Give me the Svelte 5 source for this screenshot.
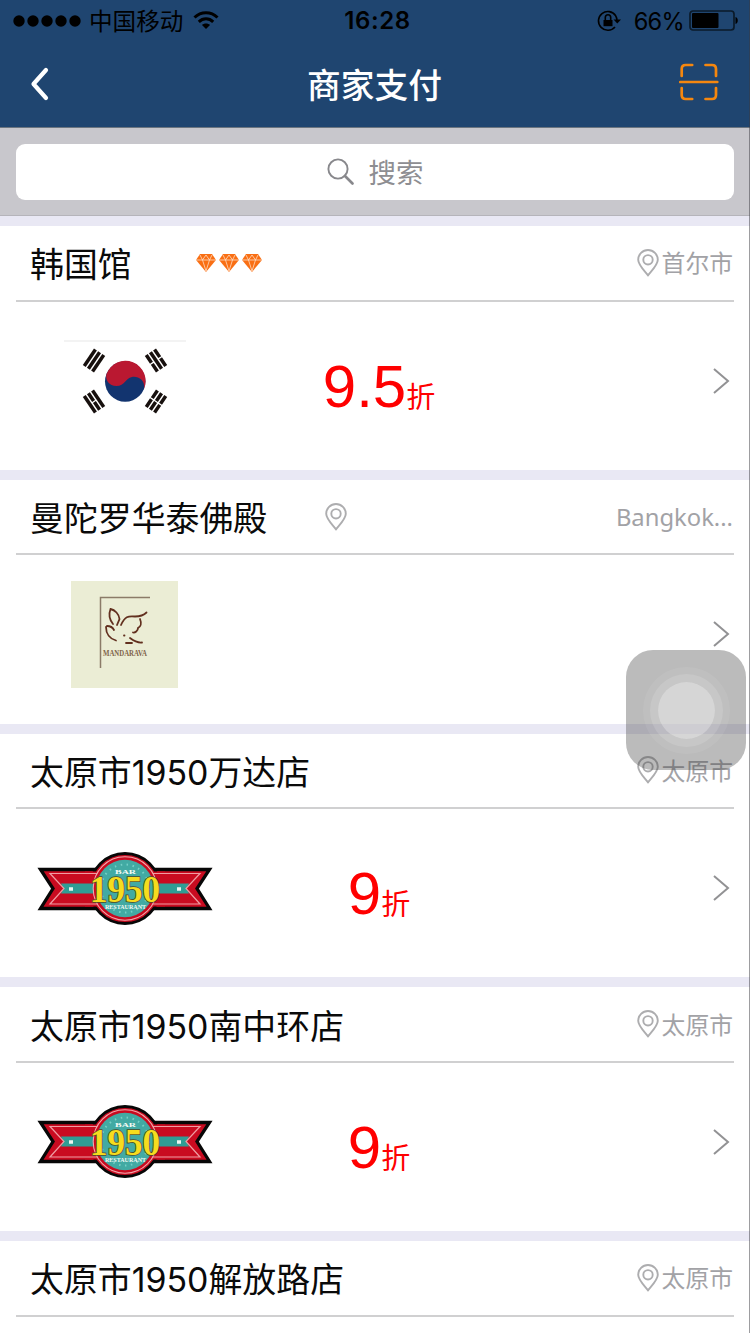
<script>
  const shops = [
    { name: '韩国馆', city: '首尔市', rate: '9.5', logo: 'korea', gems: 3 },
    { name: '曼陀罗华泰佛殿', city: 'Bangkok...', logo: 'mandarava', wide: true },
    { name: '太原市1950万达店', city: '太原市', rate: '9', logo: 'ribbon' },
    { name: '太原市1950南中环店', city: '太原市', rate: '9', logo: 'ribbon' },
    { name: '太原市1950解放路店', city: '太原市' }
  ];
  const corners = [
    { x: 94, y: 360.5, a: 34, split: [0, 0, 0] },
    { x: 156, y: 360.5, a: -34, split: [1, 0, 1] },
    { x: 94, y: 401.5, a: -34, split: [0, 1, 0] },
    { x: 156, y: 401.5, a: 34, split: [1, 1, 1] }
  ];
</script>

{#snippet pin()}
  <svg class="pin" width="22" height="28" viewBox="0 0 22 28">
    <path d="M11 26.3C7.8 22.2 1.2 16 1.2 10.8a9.8 9.8 0 0 1 19.6 0C20.8 16 14.2 22.2 11 26.3Z" />
    <circle cx="11" cy="10.8" r="4.7" />
  </svg>
{/snippet}

{#snippet korea()}
  <svg width="122" height="84" viewBox="64 339 122 84">
    <path d="M64 341h122" stroke="#f3f3f3" stroke-width="2" />
    <circle cx="125.200" cy="381.500" r="20.200" fill="#12346f" />
    <path d="M106.500 374A20.200 20.200 0 1 1 144 389C145.500 380 138 376 132 377C125 378.500 125 386 116.500 386C109 386 105 380 106.500 374Z" fill="#ba1831" />
    {#each corners as c}
      <g transform={`translate(${c.x} ${c.y}) rotate(${c.a})`} stroke="#17100e" stroke-width="3.500">
        {#each c.split as s, i}
          <path d={s ? `M${(i - 1) * 5} -10v9.300m0 1.400v9.300` : `M${(i - 1) * 5} -10v20`} />
        {/each}
      </g>
    {/each}
  </svg>
{/snippet}

{#snippet mandarava()}
  <svg width="107" height="107" viewBox="0 0 107 107">
    <rect width="107" height="107" fill="#ebedd5" />
    <path d="M29.500 87V16.500H79" fill="none" stroke="#8b7b68" stroke-width="1.500" />
    <g fill="none" stroke="#62301f" stroke-width="1.800" stroke-linecap="round">
      <path d="M42 43C38 38 38 32 39.500 28C44 29 48 33 48.500 38L46 44" />
      <path d="M50 44C54 35 57 35 64 35.500C69 35.500 73 34 75.500 31.500" />
      <path d="M69 38C71 43 70 45 67 47C67 50 64 52 62 51.500" />
      <path d="M35 46C35 53 39 58 45 59.500M36 45C39 45 42 47 43 49M53 54.500h.5M55 62h6M59 57C63 60 67 62 71 61.500" />
    </g>
    <text x="32" y="75" textLength="44" lengthAdjust="spacingAndGlyphs" class="mand">MANDARAVA</text>
  </svg>
{/snippet}

{#snippet ribbon()}
  <svg width="178" height="76" viewBox="36 851 178 76">
    <path d="M40.500 869.500H209.500L197 888.500L209.500 908.500H40.500L53 888.500Z" fill="#c90b20" stroke="#070707" stroke-width="3.300" />
    <circle cx="125" cy="888.500" r="35" fill="#c90b20" stroke="#070707" stroke-width="2.800" />
    <path d="M85 871.500H165V906.500H85Z" fill="#c90b20" />
    <path d="M61 883.500H189L186.500 888.500L189 893.500H61L63.500 888.500Z" fill="#309d94" />
    <path d="M97 873.500H50L64 888.500L50 904H97M153 873.500H200L186 888.500L200 904H153" fill="none" stroke="#ef9da3" stroke-width="1.200" />
    <circle cx="125" cy="888.500" r="31.800" fill="#c90b20" stroke="#f0a8ac" stroke-width="1.100" />
    <circle cx="125" cy="888.500" r="28.700" fill="#42aaa3" />
    <circle cx="125" cy="888.500" r="24" fill="none" stroke="#75cfc6" stroke-width="2" stroke-dasharray="1.500 4.500" />
    <path d="M69 889h4m104 0h4" stroke="#e9f5ef" stroke-width="3.500" />
    <text x="115" y="874" textLength="21" lengthAdjust="spacingAndGlyphs" class="bar">BAR</text>
    <text x="90" y="901.500" textLength="70" lengthAdjust="spacingAndGlyphs" class="year">1950</text>
    <text x="105" y="909" textLength="41" lengthAdjust="spacingAndGlyphs" class="rest">RESTAURANT</text>
  </svg>
{/snippet}

<main>
  <header>
    <div class="status">
      <div class="carrier">
        <svg width="70" height="14" viewBox="0 0 70 14">
          {#each [0, 1, 2, 3, 4] as i}<circle cx={6 + i * 14} cy="7" r="5.7" />{/each}
        </svg>
        <span>中国移动</span>
        <svg class="wifi" width="26" height="20" viewBox="0 0 26 20" fill="none" stroke="#000" stroke-width="3">
          <path d="M1.500 7.500C8 1 18 1 24.500 7.500M5.800 11.800C10 7.800 16 7.800 20.200 11.800" />
          <path d="M9 15C11 13 15 13 17 15L13 19Z" fill="#000" stroke="none" />
        </svg>
      </div>
      <b>16:28</b>
      <div class="power">
        <svg width="24" height="22" viewBox="0 0 24 22" fill="none" stroke="#000" stroke-width="1.600">
          <path d="M18.700 5.700A9.400 9.400 0 1 0 18 17M20 11A9.400 9.400 0 0 0 18.500 5.500" />
          <path d="M16.500 9.500H24L20.300 13.500Z" fill="#000" stroke="none" />
          <rect x="6.500" y="10" width="9" height="6.200" fill="#000" stroke="none" />
          <path d="M8.300 10V7.500a2.700 2.700 0 0 1 5.400 0V10" />
        </svg>
        <span>66%</span>
        <svg width="50" height="22" viewBox="0 0 50 22">
          <rect x="1" y="1" width="44" height="19" rx="3" fill="none" stroke="#0b1a29" stroke-width="1.700" />
          <rect x="3" y="3" width="26.500" height="15" rx="1" />
          <path d="M46.500 7c3 .4 3 6.600 0 7Z" />
        </svg>
      </div>
    </div>
    <nav>
      <svg width="19" height="34" viewBox="0 0 19 34"><path d="M16 3L3.500 17L16 31" fill="none" stroke="#fff" stroke-width="4.200" stroke-linecap="round" stroke-linejoin="round" /></svg>
      <h1>商家支付</h1>
      <svg class="scan" width="40" height="38" viewBox="0 0 40 38" fill="none" stroke="#f5870f" stroke-width="2.700" stroke-linecap="round">
        <path d="M2.700 13V6q0-4 4-4h6.500M26.500 2H33q4 0 4 4v7M2.700 25v7q0 4 4 4h6.500M26.500 36H33q4 0 4-4v-7M1.300 19h37" />
      </svg>
    </nav>
  </header>

  <div class="search">
    <div class="field">
      <svg width="28" height="28" viewBox="0 0 28 28" fill="none" stroke="#88888c" stroke-linecap="round">
        <circle cx="11" cy="11" r="9.600" stroke-width="1.900" />
        <path d="M18 18L25.500 25.500" stroke-width="2.700" />
      </svg>
      <span>搜索</span>
    </div>
  </div>

  {#each shops as shop}
    <section>
      <div class="head">
        <h2>{shop.name}</h2>
        {#if shop.gems}
          <div class="gems">
            {#each Array(shop.gems) as _}
              <svg width="20" height="18" viewBox="0 0 20 18">
                <path d="M4 0H16L20 6L10 18L0 6Z" fill="#f96f14" />
                <path d="M0 6H20M4 1L6.500 6L10 1L13.500 6L16 1M6.500 6L10 17L13.500 6" fill="none" stroke="#ffe3cd" stroke-width=".75" />
              </svg>
            {/each}
          </div>
        {/if}
        <div class={['place', shop.wide && 'wide']}>{@render pin()}<span>{shop.city}</span></div>
      </div>
      {#if shop.logo}
        <div class="body">
          <div class="logo">
            {#if shop.logo === 'korea'}{@render korea()}
            {:else if shop.logo === 'mandarava'}{@render mandarava()}
            {:else}{@render ribbon()}{/if}
          </div>
          <div class="rate">{#if shop.rate}<strong>{shop.rate}</strong><span>折</span>{/if}</div>
          <svg width="18" height="28" viewBox="0 0 18 28"><path d="M2 2L16 14L2 26" fill="none" stroke="#929294" stroke-width="2" /></svg>
        </div>
      {/if}
    </section>
  {/each}

  <div class="edge"></div>
  <div class="touch"><i></i></div>
</main>

<style>
  :global(body) { margin: 0; overflow: hidden; }
  main {
    position: relative; width: 750px; height: 1333px; overflow: hidden; background: #fff;
    font-family: Inter, "Noto Sans CJK SC", sans-serif; color: #0a0a0a;
  }
  svg { display: block; flex: none; }
  header { height: 128px; box-sizing: border-box; background: #1f4570; border-bottom: 1px solid #6b7580; }
  .status { height: 42px; display: grid; grid-template-columns: 1fr auto 1fr; align-items: center; padding: 0 11px 0 13px; color: #000; }
  .carrier, .power { display: flex; align-items: center; font-size: 23.600px; line-height: 40px; }
  .carrier span { margin-left: 6px; padding-top: 1px; }
  .wifi { margin: 0 0 2px 10px; }
  .status b { font-size: 24px; font-weight: 600; letter-spacing: .6px; line-height: 40px; padding-left: 3px; }
  .power { justify-content: flex-end; }
  .power svg:first-child { margin-bottom: 1px; }
  .power svg:last-child { margin-bottom: 1px; }
  .power span { margin: 0 5px 0 13px; letter-spacing: -.7px; padding-top: 1px; }
  nav { height: 85px; display: grid; grid-template-columns: 60px 1fr 60px; align-items: center; box-sizing: border-box; padding: 0 31px 0 30px; }
  nav svg:first-child { margin-bottom: 2px; }
  .scan { justify-self: end; margin-bottom: 5px; }
  h1 { margin: 0; padding-top: 2px; text-align: center; font-size: 33.700px; font-weight: 500; color: #fff; line-height: 60px; }
  .search { height: 88px; box-sizing: border-box; padding: 16px 16px 15px; background: #c8c7cc; border-bottom: 1px solid #b5b4ba; }
  .field { height: 56px; display: flex; align-items: center; justify-content: center; gap: 14px; border-radius: 9px; background: #fff; color: #8e8e92; font-size: 27.500px; }
  .field span { margin-bottom: 3px; }
  section { height: 253.750px; box-sizing: border-box; border-top: 10px solid #e9e8f4; display: flex; flex-direction: column; }
  .head { flex: none; height: 75.500px; box-sizing: border-box; margin: 0 16px; padding-left: 14px; border-bottom: 2px solid #d0d0d1; display: flex; align-items: center; }
  h2 { margin: 0; padding-top: 4px; font-size: 33.900px; font-weight: 400; line-height: 69px; white-space: nowrap; }
  .gems { display: flex; gap: 3px; margin-left: 64.300px; }
  .place { margin-left: auto; display: flex; align-items: center; gap: 3px; color: #a2a2a6; font-size: 23.800px; padding-right: 1px; }
  .place span { margin-bottom: 2px; }
  .pin { fill: none; stroke: #adadaf; stroke-width: 1.900; }
  .wide { flex: 1; margin-left: 57.500px; justify-content: space-between; font-family: "Noto Sans", sans-serif; }
  .wide span { margin-bottom: 0; }
  .body { flex: 1; display: grid; grid-template-columns: 218px 1fr 18px; align-items: center; padding: 0 20px 10px 16px; }
  .logo { display: flex; justify-content: center; padding: 1px 1px 0 0; }
  .rate { display: flex; align-items: baseline; justify-content: center; width: 290px; padding-top: 12px; color: #f00; }
  .rate strong { font: 400 60px/70px "Liberation Sans", sans-serif; }
  .rate span { font-size: 29px; line-height: 40px; position: relative; top: 1px; }
  .mand { font: bold 8px "Liberation Serif", serif; fill: #806349; }
  .bar { font: bold 7px "Liberation Serif", serif; fill: #f4faf5; }
  .year { font: bold 37px "Liberation Serif", serif; fill: #f6dc1e; stroke: #4b4a2b; stroke-width: 1.600px; paint-order: stroke; }
  .rest { font: bold 6px "Liberation Serif", serif; fill: #f4faf5; }
  .edge { position: absolute; right: 0; top: 0; width: 1px; height: 1333px; background: rgba(60, 60, 65, .5); }
  .touch { position: absolute; left: 626px; top: 650px; width: 120px; height: 120px; border-radius: 27px; background: rgba(70, 70, 70, .37); display: grid; place-items: center; }
  .touch i { width: 57px; height: 57px; border-radius: 50%; background: rgba(255, 255, 255, .4); box-shadow: 0 0 0 8px rgba(255, 255, 255, .13), 0 0 0 15px rgba(255, 255, 255, .07); }
</style>
